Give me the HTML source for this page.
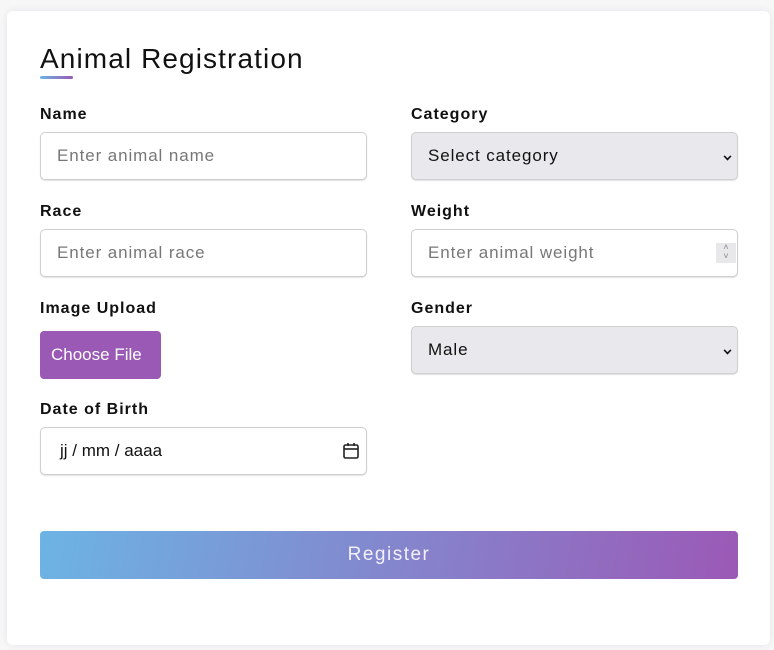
<!DOCTYPE html>
<html><head><style>
*{box-sizing:border-box;margin:0;padding:0}
body{width:774px;height:650px;background:#f7f7f8;font-family:"Liberation Sans",sans-serif;position:relative;overflow:hidden}
.card{position:absolute;left:7px;top:11px;width:763px;height:634px;background:#fff;border-radius:6px;box-shadow:0 0 8px rgba(0,0,0,.08)}
.t{position:absolute;left:40px;top:43px;font-size:28px;color:#111;letter-spacing:1.1px}
.ul{position:absolute;left:40px;top:76px;width:33px;height:3px;border-radius:2px;background:linear-gradient(90deg,#6cb4e4,#9b59b6)}
.l{position:absolute;font-size:16px;font-weight:bold;color:#111;letter-spacing:1px;margin-top:2px}
.i{position:absolute;width:327px;height:48px;border:1px solid #cfcfcf;border-radius:5px;box-shadow:0 1px 1px rgba(0,0,0,.12);font-size:17px;padding:13px 16px;color:#777;background:#fff;letter-spacing:.9px}
.s{background:#e9e8ec;color:#111}
.chev{position:absolute;right:6px;top:20px;width:7px;height:7px;border-right:2px solid #111;border-bottom:2px solid #111;transform:rotate(45deg) scale(.8)}
.btn{position:absolute;left:40px;top:331px;width:121px;height:48px;background:#9b59b6;color:#fff;border-radius:4px;font-size:17px;padding:14px 11px}
.reg{position:absolute;left:40px;top:531px;width:698px;height:48px;border-radius:4px;background:linear-gradient(100deg,#6cb4e4,#9b59b6);color:#f4f0fb;font-size:19px;text-align:center;line-height:48px;letter-spacing:1.5px}
</style></head><body>
<div class="card"></div>
<div class="t">Animal Registration</div><div class="ul"></div>
<div class="l" style="left:40px;top:104px">Name</div>
<div class="i" style="left:40px;top:132px">Enter animal name</div>
<div class="l" style="left:411px;top:104px">Category</div>
<div class="i s" style="left:411px;top:132px">Select category<div class="chev"></div></div>
<div class="l" style="left:40px;top:201px">Race</div>
<div class="i" style="left:40px;top:229px">Enter animal race</div>
<div class="l" style="left:411px;top:201px">Weight</div>
<div class="i" style="left:411px;top:229px">Enter animal weight<div style="position:absolute;right:1px;top:13px;width:20px;height:20px;background:#e8e8ea;color:#888;font-size:9px;line-height:9px;text-align:center;letter-spacing:0">&#708;<br>&#709;</div></div>
<div class="l" style="left:40px;top:298px">Image Upload</div>
<div class="btn">Choose File</div>
<div class="l" style="left:411px;top:298px">Gender</div>
<div class="i s" style="left:411px;top:326px">Male<div class="chev"></div></div>
<div class="l" style="left:40px;top:399px">Date of Birth</div>
<div class="i" style="left:40px;top:427px;color:#111;padding-left:19px;letter-spacing:0">jj / mm / aaaa
<svg style="position:absolute;right:6px;top:14px" width="18" height="18" viewBox="0 0 18 18"><rect x="2" y="3" width="14" height="13" rx="1.5" fill="none" stroke="#222" stroke-width="1.6"/><line x1="2" y1="7" x2="16" y2="7" stroke="#222" stroke-width="1.6"/><line x1="6" y1="1" x2="6" y2="4" stroke="#222" stroke-width="1.6"/><line x1="12" y1="1" x2="12" y2="4" stroke="#222" stroke-width="1.6"/></svg></div>
<div class="reg">Register</div>
</body></html>
